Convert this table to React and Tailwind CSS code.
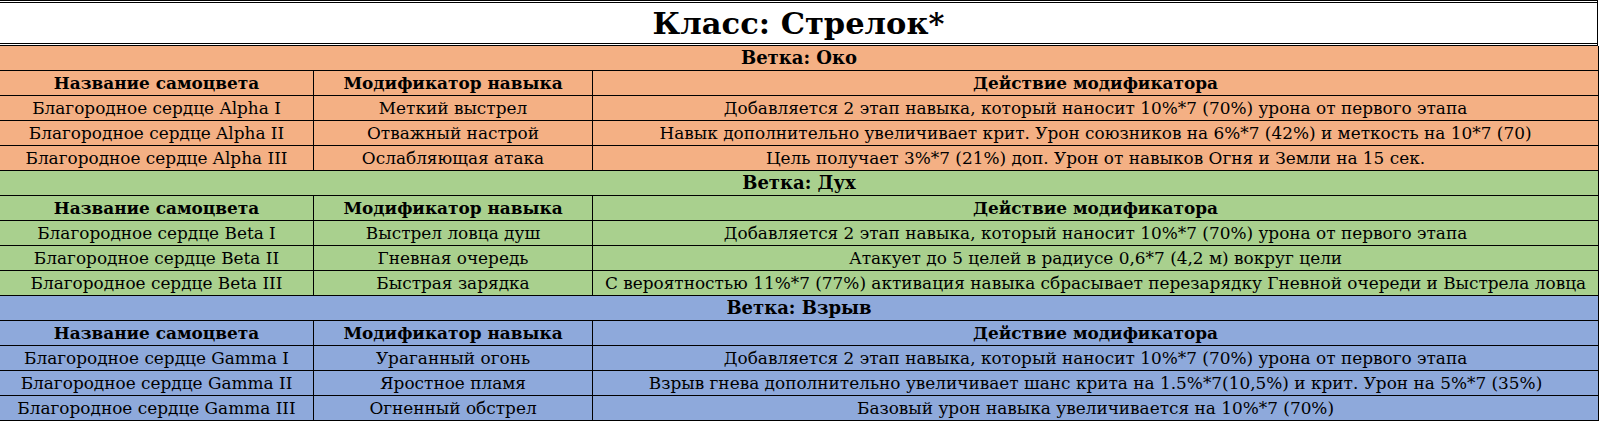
const branches = [
  {
    name: 'Ветка: Око',
    bg: 'bg-[#f4b084]',
    rows: [
      ['Благородное сердце Alpha I', 'Меткий выстрел', 'Добавляется 2 этап навыка, который наносит 10%*7 (70%) урона от первого этапа'],
      ['Благородное сердце Alpha II', 'Отважный настрой', 'Навык дополнительно увеличивает крит. Урон союзников на 6%*7 (42%) и меткость на 10*7 (70)'],
      ['Благородное сердце Alpha III', 'Ослабляющая атака', 'Цель получает 3%*7 (21%) доп. Урон от навыков Огня и Земли на 15 сек.'],
    ],
  },
  {
    name: 'Ветка: Дух',
    bg: 'bg-[#a9d08e]',
    rows: [
      ['Благородное сердце Beta I', 'Выстрел ловца душ', 'Добавляется 2 этап навыка, который наносит 10%*7 (70%) урона от первого этапа'],
      ['Благородное сердце Beta II', 'Гневная очередь', 'Атакует до 5 целей в радиусе 0,6*7 (4,2 м) вокруг цели'],
      ['Благородное сердце Beta III', 'Быстрая зарядка', 'С вероятностью 11%*7 (77%) активация навыка сбрасывает перезарядку Гневной очереди и Выстрела ловца'],
    ],
  },
  {
    name: 'Ветка: Взрыв',
    bg: 'bg-[#8ea9db]',
    rows: [
      ['Благородное сердце Gamma I', 'Ураганный огонь', 'Добавляется 2 этап навыка, который наносит 10%*7 (70%) урона от первого этапа'],
      ['Благородное сердце Gamma II', 'Яростное пламя', 'Взрыв гнева дополнительно увеличивает шанс крита на 1.5%*7(10,5%) и крит. Урон на 5%*7 (35%)'],
      ['Благородное сердце Gamma III', 'Огненный обстрел', 'Базовый урон навыка увеличивается на 10%*7 (70%)'],
    ],
  },
]

const headers = ['Название самоцвета', 'Модификатор навыка', 'Действие модификатора']

function Row({ cells, bold }) {
  return (
    <div className={`flex h-[25px] border-b border-black ${bold ? 'font-bold' : ''}`}>
      <div className="w-[314px] shrink-0 border-r border-black flex items-center justify-center whitespace-nowrap">
        {cells[0]}
      </div>
      <div className="w-[279px] shrink-0 border-r border-black flex items-center justify-center whitespace-nowrap">
        {cells[1]}
      </div>
      <div className="flex-1 border-r border-black flex items-center justify-center whitespace-nowrap">
        {cells[2]}
      </div>
    </div>
  )
}

export default function App() {
  return (
    <div className="w-[1599px] h-[424px] bg-white text-black text-[16.9px] leading-none font-['DejaVu_Serif',Georgia,serif] overflow-hidden">
      <div className="w-[1598px] h-[46px] border-y-[3px] border-r border-double border-black flex items-center justify-center text-[30.5px] font-bold">
        Класс: Стрелок*
      </div>
      {branches.map((b) => (
        <div key={b.name} className={b.bg}>
          <div className="h-[25px] border-b border-r border-black flex items-center justify-center font-bold text-[18px]">
            {b.name}
          </div>
          <Row cells={headers} bold />
          {b.rows.map((r) => (
            <Row key={r[0]} cells={r} />
          ))}
        </div>
      ))}
    </div>
  )
}
